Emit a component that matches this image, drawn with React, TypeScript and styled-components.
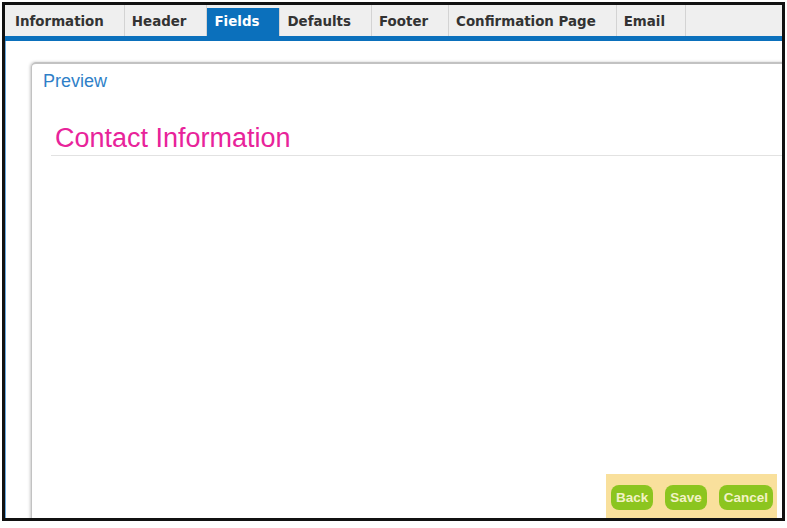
import React from 'react'
import styled, { createGlobalStyle } from 'styled-components'

const GlobalStyle = createGlobalStyle`
  html, body {
    margin: 0;
    padding: 0;
    background: #ffffff;
  }
  body {
    font-family: "Liberation Sans", Arial, sans-serif;
  }
`

const Frame = styled.div`
  position: relative;
  box-sizing: border-box;
  margin: 2px 0 0 2px;
  width: 783px;
  height: 519px;
  border: 3px solid #111111;
  display: flex;
  flex-direction: column;
  overflow: hidden;
  background: #ffffff;
`

const TabBar = styled.div`
  box-sizing: border-box;
  display: flex;
  align-items: flex-end;
  height: 36px;
  padding-left: 3px;
  background: #efefef;
  border-bottom: 5px solid #0b70bc;
  flex-shrink: 0;
`

const Tab = styled.div<{ $active?: boolean }>`
  box-sizing: border-box;
  display: flex;
  align-items: center;
  height: ${({ $active }) => ($active ? '28px' : '31px')};
  padding: ${({ $active }) => ($active ? '1px 20px 2px 7px' : '2px 20px 0 7px')};
  border-right: 1px solid #d3d3d3;
  background: ${({ $active }) => ($active ? '#0b70bc' : 'transparent')};
  color: ${({ $active }) => ($active ? '#ffffff' : '#333333')};
  font-family: "DejaVu Sans", Verdana, sans-serif;
  font-weight: bold;
  font-size: 13.4px;
  white-space: nowrap;
`

const Content = styled.div`
  flex: 1;
  display: flex;
  padding: 21px 0 0 25px;
  border-left: 1px solid #6aaae0;
  overflow: hidden;
`

const Panel = styled.div`
  flex-shrink: 0;
  width: 800px;
  height: 520px;
  border: 1px solid #c2c2c2;
  border-top-width: 2px;
  border-radius: 5px 0 0 0;
  box-shadow: -1px 0 3px rgba(0, 0, 0, 0.22);
`

const PanelTitle = styled.div`
  padding: 7px 0 0 11px;
  font-size: 18px;
  line-height: 21px;
  color: #2f7fc8;
`

const SectionHeading = styled.h2`
  margin: 31px 0 0 19px;
  padding: 0 0 1px 4px;
  border-bottom: 1px solid #e2e2e2;
  font-size: 27px;
  font-weight: normal;
  line-height: 31px;
  color: #e8239a;
`

const ActionBar = styled.div`
  position: absolute;
  right: 5px;
  bottom: 0;
  display: flex;
  gap: 12px;
  padding: 11px 4px 8px 5px;
  background: #f9e09c;
`

const ActionButton = styled.button`
  height: 25px;
  padding: 0 5px;
  border: none;
  border-radius: 8px;
  background: #8cc51f;
  color: #f3f2c6;
  font-family: "Liberation Sans", Arial, sans-serif;
  font-weight: bold;
  font-size: 13.5px;
  cursor: pointer;
`

const tabs = ['Information', 'Header', 'Fields', 'Defaults', 'Footer', 'Confirmation Page', 'Email']

const App = () => {
  return (
    <>
      <GlobalStyle />
      <Frame>
        <TabBar>
          {tabs.map((t) => (
            <Tab key={t} $active={t === 'Fields'}>
              {t}
            </Tab>
          ))}
        </TabBar>
        <Content>
          <Panel>
            <PanelTitle>Preview</PanelTitle>
            <SectionHeading>Contact Information</SectionHeading>
          </Panel>
        </Content>
        <ActionBar>
          <ActionButton>Back</ActionButton>
          <ActionButton>Save</ActionButton>
          <ActionButton>Cancel</ActionButton>
        </ActionBar>
      </Frame>
    </>
  )
}

export default App
